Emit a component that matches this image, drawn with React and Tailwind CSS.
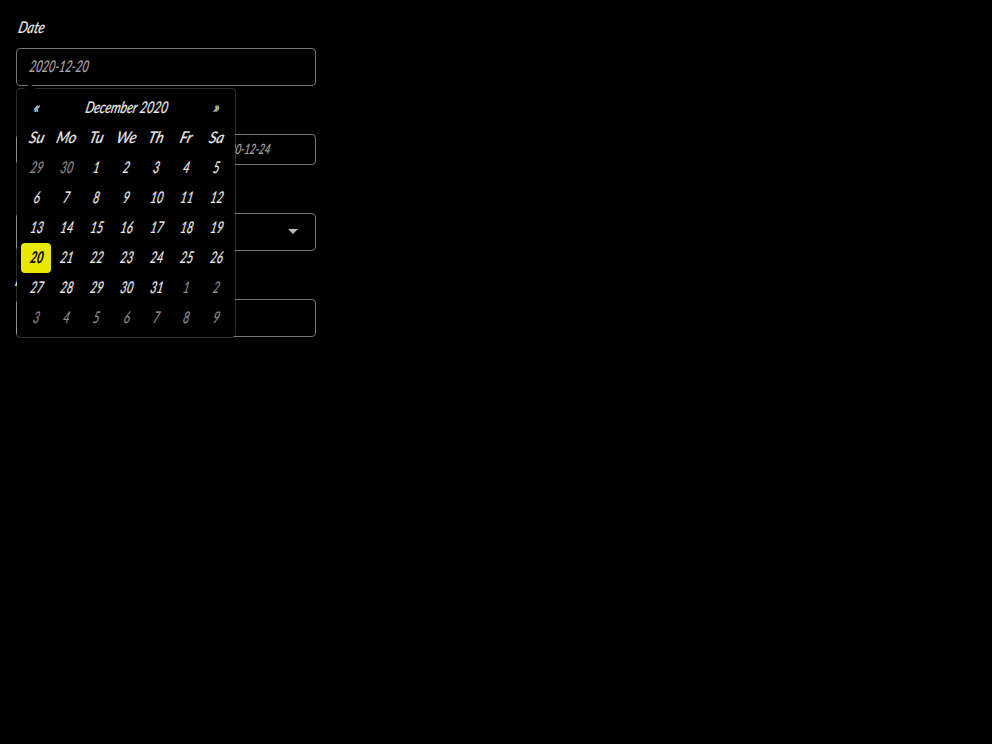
const script = "font-['Lato','Liberation_Sans',sans-serif] italic";

function Txt({ children, className = "" }) {
  return (
    <span className={`relative -top-px left-px inline-block whitespace-nowrap -skew-x-[16deg] [-webkit-text-stroke:0.2px_currentColor] ${className}`}>
      {children}
    </span>
  );
}

const days = ["Su", "Mo", "Tu", "We", "Th", "Fr", "Sa"];
const dates = [29, 30, ...Array.from({ length: 31 }, (_, i) => i + 1), 1, 2, 3, 4, 5, 6, 7, 8, 9];

function Calendar() {
  return (
    <div className="absolute left-0 top-[40px] z-10 w-[220px] h-[250px] rounded-[4px] border border-white/17 bg-black bg-clip-padding p-1 text-[#ececec]">
      <div className="absolute left-[7px] -top-[5px] h-[5px] w-[12px] bg-black [clip-path:polygon(50%_0,100%_100%,0_100%)]" />
      <div className="grid grid-cols-7 auto-rows-[30px] text-center text-[16px] leading-[30px]">
        <div><Txt className="scale-x-90">«</Txt></div>
        <div className="col-span-5 pl-px"><Txt className="scale-x-[.76]">December 2020</Txt></div>
        <div><Txt className="scale-x-90">»</Txt></div>
        {days.map((d) => (
          <div key={d}><Txt className="scale-x-90">{d}</Txt></div>
        ))}
        {dates.map((n, i) => (
          <div
            key={i}
            className={
              i === 21
                ? "rounded-[4px] bg-[#e8e800] text-black font-bold"
                : i < 2 || i > 32
                  ? "text-[#8c8c8c]"
                  : ""
            }
          >
            <Txt className="scale-x-[.7]">{n}</Txt>
          </div>
        ))}
      </div>
    </div>
  );
}

export default function App() {
  return (
    <div className={`min-h-screen bg-black p-4 text-[#ececec] ${script}`}>
      <div className="w-[300px]">
        <div className="h-8 pl-[2px] text-[16px] leading-6"><Txt className="origin-left scale-x-[.8]">Date</Txt></div>
        <div className="relative h-[38px] rounded-[4px] border border-[#757575] pl-3 text-[16px] leading-9 text-[#aaa]">
          <Txt className="origin-left scale-x-[.69]">2020-12-20</Txt>
          <div className="absolute -left-px -top-px"><Calendar /></div>
        </div>
        <div className="mt-12 h-[31px] rounded-[4px] border border-[#757575] pl-[201px] text-[14px] leading-[29px] text-[#aaa]">
          <Txt className="origin-left scale-x-[.69]">2020-12-24</Txt>
        </div>
        <div className="mt-12 flex h-[38px] items-center justify-end rounded-[4px] border border-[#757575] pr-[17px]">
          <svg className="mb-px" width="10" height="5" viewBox="0 0 10 5" fill="#bbb"><path d="M0 0h10L5 5z" /></svg>
        </div>
        <div className="-ml-px mt-4 mr-px h-8 text-[16px] leading-7"><Txt className="origin-left">Month</Txt></div>
        <div className="h-[38px] rounded-[4px] border border-[#757575]" />
      </div>
    </div>
  );
}
